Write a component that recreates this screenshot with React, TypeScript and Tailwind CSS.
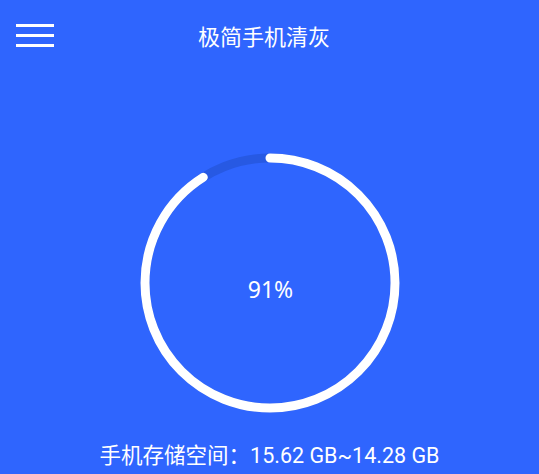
export default function App() {
  const r = 125
  const c = 2 * Math.PI * r
  const percent = 91

  return (
    <div className="w-[539px] h-[474px] overflow-hidden bg-[#2f65fe] text-white flex flex-col items-center font-['Roboto','Noto_Sans_CJK_SC',sans-serif]">
      {/* Top bar */}
      <div className="w-full h-[70px] grid grid-cols-[1fr_auto_1fr] items-center">
        <button type="button" className="ml-4 w-[38px] flex flex-col gap-[7px] justify-self-start">
          <span className="block h-[3px] w-full bg-white" />
          <span className="block h-[3px] w-full bg-white" />
          <span className="block h-[3px] w-full bg-white" />
        </button>
        <h1 className="mr-[11px] text-[22px] leading-none font-['Noto_Sans_CJK_SC',sans-serif] -mt-[1px]">极简手机清灰</h1>
        <div />
      </div>

      {/* Progress ring */}
      <div className="relative mt-[78px] w-[270px] h-[270px]">
        <svg width="270" height="270" viewBox="0 0 270 270">
          <circle cx="135" cy="135" r={r} fill="none" stroke="#2759e3" strokeWidth="9" />
          <circle
            cx="135"
            cy="135"
            r={r}
            fill="none"
            stroke="#ffffff"
            strokeWidth="9"
            strokeLinecap="round"
            strokeDasharray={`${(c * percent) / 100} ${c}`}
            transform="rotate(-90 135 135)"
          />
        </svg>
        <div className="absolute inset-0 flex items-center justify-center pt-[12px] pl-[2px] text-[23px] font-['Noto_Sans',sans-serif]">
          {percent}%
        </div>
      </div>

      <p className="mt-[24px] text-[21.5px] leading-[28px]">手机存储空间：15.62 GB~14.28 GB</p>
    </div>
  )
}
